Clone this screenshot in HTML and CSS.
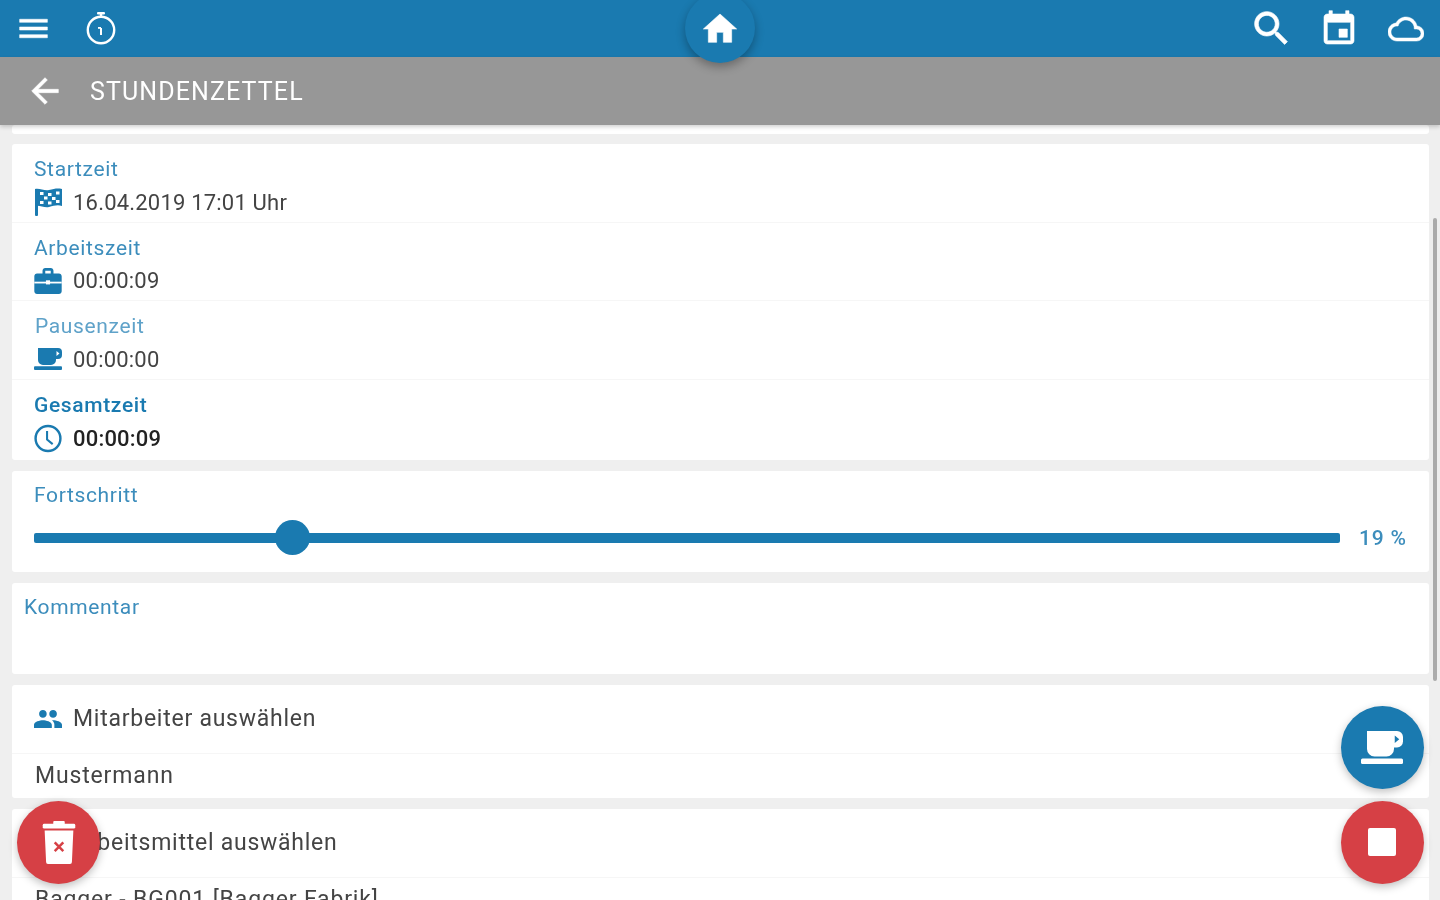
FILE: index.html
```html
<!DOCTYPE html>
<html lang="de">
<head>
<meta charset="utf-8">
<title>Stundenzettel</title>
<link rel="stylesheet" href="styles.css">
</head>
<body>
<svg class="defs" width="0" height="0" aria-hidden="true">
  <symbol id="cup" viewBox="0 0 28 22">
    <path fill-rule="evenodd" d="M4 0H24a4 4 0 0 1 4 4v3a4 4 0 0 1-4 4h-2v1a5 5 0 0 1-5 5H9a5 5 0 0 1-5-5zM22.500 3v5l3-2.500z"/>
    <rect x="0" y="18.300" width="28" height="3.700" rx="1"/>
  </symbol>
</svg>
<div class="app">
  <header class="topbar">
    <div class="bar-group">
      <svg class="ic ic-menu" viewBox="0 0 24 24"><path d="M3 18h18v-2H3v2zm0-5h18v-2H3v2zm0-7v2h18V6H3z"/></svg>
      <svg class="ic ic-timer" viewBox="0 0 30 34"><circle cx="15" cy="19" r="13.200" fill="none" stroke="#fff" stroke-width="2.400"/><rect x="11" y="1" width="8" height="2.400" rx="1"/><rect x="13.800" y="2" width="2.400" height="4"/><rect x="14" y="17" width="2" height="7"/><rect x="12" y="16" width="3" height="1.800"/></svg>
    </div>
    <div class="bar-group">
      <svg class="ic ic-search" viewBox="0 0 24 24"><path d="M15.500 14h-.79l-.28-.27C15.410 12.590 16 11.110 16 9.500 16 5.910 13.090 3 9.500 3S3 5.910 3 9.500 5.910 16 9.500 16c1.610 0 3.090-.59 4.230-1.570l.27.28v.79l5 4.990L20.490 19l-4.990-5zm-6 0C7.010 14 5 11.990 5 9.500S7.010 5 9.500 5 14 7.010 14 9.500 11.990 14 9.500 14z"/></svg>
      <svg class="ic ic-event" viewBox="0 0 24 24"><path d="M17 12h-5v5h5v-5zM16 1v2H8V1H6v2H5c-1.110 0-1.990.9-1.990 2L3 19c0 1.100.89 2 2 2h14c1.100 0 2-.9 2-2V5c0-1.100-.9-2-2-2h-1V1h-2zm3 18H5V8h14v11z"/></svg>
      <svg class="ic ic-cloud" viewBox="0 0 24 24"><path d="M19.350 10.040C18.670 6.590 15.640 4 12 4 9.110 4 6.600 5.640 5.350 8.040 2.340 8.360 0 10.910 0 14c0 3.310 2.690 6 6 6h13c2.760 0 5-2.240 5-5 0-2.640-2.050-4.780-4.650-4.960zM19 18H6c-2.210 0-4-1.790-4-4s1.790-4 4-4h.71C7.370 7.690 9.480 6 12 6c3.040 0 5.500 2.460 5.500 5.500v.5H19c1.660 0 3 1.340 3 3s-1.340 3-3 3z"/></svg>
    </div>
  </header>
  <div class="home-btn"><svg class="ic ic-home" viewBox="0 0 24 24"><path d="M10 20v-6h4v6h5v-8h3L12 3 2 12h3v8z"/></svg></div>
  <div class="subbar">
    <svg class="ic ic-back" viewBox="0 0 24 24"><path d="M20 11H7.830l5.590-5.590L12 4l-8 8 8 8 1.410-1.410L7.830 13H20v-2z"/></svg>
    <span class="subbar-title">STUNDENZETTEL</span>
  </div>
  <main class="content">
    <div class="card card-stub"></div>
    <section class="card card-times">
      <div class="time-row">
        <div class="label">Startzeit</div>
        <div class="value-line">
          <svg class="row-ic ic-flag" viewBox="0 0 28 28"><rect x="1" y="1" width="3" height="27" rx="1"/><path d="M1 1c5-1 9 2 14 1s8-2 13-1v17c-5-1.500-8 0-13 1s-9-2-14-1z"/><g fill="#fff"><rect x="6" y="4" width="3.500" height="3"/><rect x="14" y="5" width="3.500" height="3"/><rect x="22" y="3.500" width="3.500" height="3"/><rect x="10" y="8.500" width="3.500" height="3"/><rect x="18" y="9" width="3.500" height="3"/><rect x="6" y="13" width="3.500" height="3"/><rect x="14" y="13.500" width="3.500" height="3"/><rect x="22" y="12" width="3.500" height="3"/></g></svg>
          <span class="value">16.04.2019 17:01 Uhr</span>
        </div>
      </div>
      <div class="time-row">
        <div class="label">Arbeitszeit</div>
        <div class="value-line">
          <svg class="row-ic ic-work" viewBox="2 2 20 19"><path d="M20 6h-4V4c0-1.110-.89-2-2-2h-4c-1.110 0-2 .89-2 2v2H4c-1.110 0-1.990.89-1.990 2L2 19c0 1.110.89 2 2 2h16c1.110 0 2-.89 2-2V8c0-1.110-.89-2-2-2zm-6 0h-4V4h4v2z"/><rect x="2" y="12" width="20" height="1.300" fill="#fff"/><rect x="10.500" y="11" width="3" height="3" fill="#fff"/></svg>
          <span class="value">00:00:09</span>
        </div>
      </div>
      <div class="time-row">
        <div class="label label-soft">Pausenzeit</div>
        <div class="value-line">
          <svg class="row-ic ic-cup"><use href="#cup"/></svg>
          <span class="value">00:00:00</span>
        </div>
      </div>
      <div class="time-row time-row-total">
        <div class="label label-strong">Gesamtzeit</div>
        <div class="value-line">
          <svg class="row-ic ic-clock" viewBox="0 0 30 30"><circle cx="15" cy="15" r="13.300" fill="none" stroke="#1a7ab0" stroke-width="2.600"/><path d="M14 7v9l6 5" fill="none" stroke="#1a7ab0" stroke-width="2.200"/></svg>
          <span class="value value-strong">00:00:09</span>
        </div>
      </div>
    </section>
    <section class="card card-progress">
      <div class="label">Fortschritt</div>
      <div class="slider-line">
        <div class="slider"><div class="slider-thumb"></div></div>
        <span class="percent">19 %</span>
      </div>
    </section>
    <section class="card card-comment">
      <div class="label">Kommentar</div>
    </section>
    <section class="card card-select">
      <div class="select-head">
        <svg class="row-ic ic-group" viewBox="1 5 22 14"><path d="M16 11c1.660 0 2.990-1.340 2.990-3S17.660 5 16 5c-1.660 0-3 1.340-3 3s1.340 3 3 3zm-8 0c1.660 0 2.990-1.340 2.990-3S9.660 5 8 5C6.340 5 5 6.340 5 8s1.340 3 3 3zm0 2c-2.330 0-7 1.170-7 3.500V19h14v-2.500c0-2.330-4.670-3.500-7-3.500zm8 0c-.29 0-.62.020-.97.050 1.160.84 1.970 1.970 1.970 3.450V19h6v-2.500c0-2.330-4.670-3.500-7-3.500z"/></svg>
        <span class="select-title">Mitarbeiter auswählen</span>
      </div>
      <div class="select-item">Mustermann</div>
    </section>
    <section class="card card-select">
      <div class="select-head">
        <span class="row-ic"></span>
        <span class="select-title">Arbeitsmittel auswählen</span>
      </div>
      <div class="select-item">Bagger - BG001 [Bagger Fabrik]</div>
    </section>
  </main>
  <div class="scroll-thumb"></div>
  <button class="fab fab-trash" type="button" aria-label="Löschen">
    <svg class="ic-trash" viewBox="0 0 34 46"><rect x="0" y="4" width="34" height="5" rx="1.500" fill="#fff"/><rect x="11" y="1" width="12" height="4" rx="1" fill="#fff"/><path d="M2 11H32L30.500 44a2 2 0 0 1-2 2H5.500a2 2 0 0 1-2-2z" fill="#fff"/><path d="M12.500 23.500l9 9m0-9l-9 9" stroke="#d64045" stroke-width="2.600"/></svg>
  </button>
  <button class="fab fab-cup" type="button" aria-label="Pause">
    <svg class="ic-fabcup"><use href="#cup"/></svg>
  </button>
  <button class="fab fab-stop" type="button" aria-label="Stopp">
    <span class="stop-square"></span>
  </button>
</div>
</body>
</html>
```
FILE: styles.css
```css
* { box-sizing: border-box; }
html, body { margin: 0; padding: 0; height: 100%; overflow: hidden; }
body {
  font-family: Roboto, "Liberation Sans", sans-serif;
  background: linear-gradient(#1a7ab0 57px, #efefef 57px);
}
.defs { position: absolute; }

.app {
  position: relative;
  width: 1440px;
  height: 900px;
  display: flex;
  flex-direction: column;
  overflow: hidden;
  background: #efefef;
  filter: blur(0.7px);
}

.ic { display: block; fill: #fff; stroke: #fff; stroke-width: 0.35px; flex: none; }

.topbar {
  flex: none;
  height: 57px;
  background: #1a7ab0;
  display: flex;
  align-items: center;
  justify-content: space-between;
  padding: 0 16px 0 15px;
}
.bar-group { display: flex; align-items: center; }
.ic-menu { width: 37px; height: 37px; }
.ic-timer { width: 30px; height: 34px; margin-left: 34px; margin-top: -1px; stroke-width: 0; }
.ic-search { width: 45px; height: 45px; }
.ic-event { width: 40px; height: 40px; margin-left: 25px; }
.ic-cloud { width: 36px; height: 36px; margin-left: 29px; }

.home-btn {
  position: absolute;
  left: 685px;
  top: -7px;
  width: 70px;
  height: 70px;
  border-radius: 50%;
  background: #1a7ab0;
  display: flex;
  align-items: center;
  justify-content: center;
  box-shadow: 0 4px 10px rgba(0, 0, 0, 0.3);
  z-index: 3;
}
.ic-home { width: 40px; height: 40px; margin-top: 1px; }

.subbar {
  flex: none;
  position: relative;
  z-index: 2;
  height: 68px;
  background: #979797;
  display: flex;
  align-items: center;
  padding-left: 25px;
  box-shadow: 0 2px 4px rgba(0, 0, 0, 0.18);
}
.ic-back { width: 40px; height: 40px; }
.subbar-title {
  margin-left: 25px;
  font-size: 25px;
  letter-spacing: 1.100px;
  color: #fff;
}

.content {
  flex: 1;
  min-height: 0;
  overflow: hidden;
  display: flex;
  flex-direction: column;
  gap: 10.500px;
  padding: 0 11px 0 12px;
}
.card {
  flex: none;
  background: #fff;
  border-radius: 3px;
}
.card-stub { height: 8.500px; }
.card-times { height: 316px; }
.card-progress { height: 101.500px; padding: 11px 22px 0; }
.card-comment { height: 91.500px; padding: 11px 12px 0; }
.card-select { height: 113.500px; }

.time-row {
  height: 78.700px;
  padding: 12px 22px 0;
  border-bottom: 1px solid #f6f6f6;
}
.time-row-total { border-bottom: 0; }

.label {
  height: 26px;
  line-height: 26px;
  font-size: 21px;
  letter-spacing: 0.650px;
  color: #3c8dbc;
}
.label-soft { color: #5fa2c9; padding-left: 1px; }
.label-strong { color: #1a7ab0; font-weight: 500; }

.value-line {
  height: 40px;
  display: flex;
  align-items: center;
}
.value {
  font-size: 22px;
  letter-spacing: 0.200px;
  color: #444;
}
.value-strong { color: #222; font-weight: 500; }

.row-ic {
  display: block;
  flex: none;
  width: 28px;
  margin-right: 11px;
  fill: #1a7ab0;
}
.ic-flag { height: 28px; }
.ic-work { height: 26px; }
.ic-cup { height: 22px; }
.ic-clock { height: 29px; }
.ic-group { height: 18px; }

.slider-line {
  display: flex;
  align-items: center;
  margin-top: 12px;
  height: 36px;
}
.slider {
  position: relative;
  width: 1306px;
  height: 10px;
  border-radius: 2px;
  background: #1a7ab0;
}
.slider-thumb {
  position: absolute;
  left: 241px;
  top: -13px;
  width: 35px;
  height: 35px;
  border-radius: 50%;
  background: #1a7ab0;
}
.percent {
  margin-left: 19px;
  font-size: 21px;
  letter-spacing: 0.800px;
  color: #3c8dbc;
  font-weight: 500;
}

.select-head {
  height: 69px;
  padding: 0 22px;
  display: flex;
  align-items: center;
  border-bottom: 1px solid #f6f6f6;
}
.select-title {
  font-size: 23px;
  letter-spacing: 0.750px;
  color: #444;
}
.select-item {
  padding: 9px 23px 0;
  font-size: 23px;
  letter-spacing: 0.850px;
  line-height: 26px;
  color: #444;
}

.scroll-thumb {
  position: absolute;
  left: 1433px;
  top: 218px;
  width: 4px;
  height: 463px;
  background: #ababab;
  border-radius: 2px;
}

.fab {
  position: absolute;
  width: 83px;
  height: 83px;
  border: 0;
  padding: 0;
  border-radius: 50%;
  display: flex;
  align-items: center;
  justify-content: center;
  box-shadow: 0 3px 8px rgba(0, 0, 0, 0.25);
}
.fab-trash { left: 17px; top: 800.500px; background: #d64045; }
.fab-cup { left: 1340.500px; top: 705.500px; background: #1a7ab0; }
.fab-stop { left: 1340.500px; top: 800.500px; background: #d64045; }
.ic-trash { display: block; width: 34px; height: 44px; }
.ic-fabcup { display: block; width: 42px; height: 33px; fill: #fff; }
.stop-square { display: block; width: 28px; height: 28px; background: #fff; border-radius: 2px; }
```
